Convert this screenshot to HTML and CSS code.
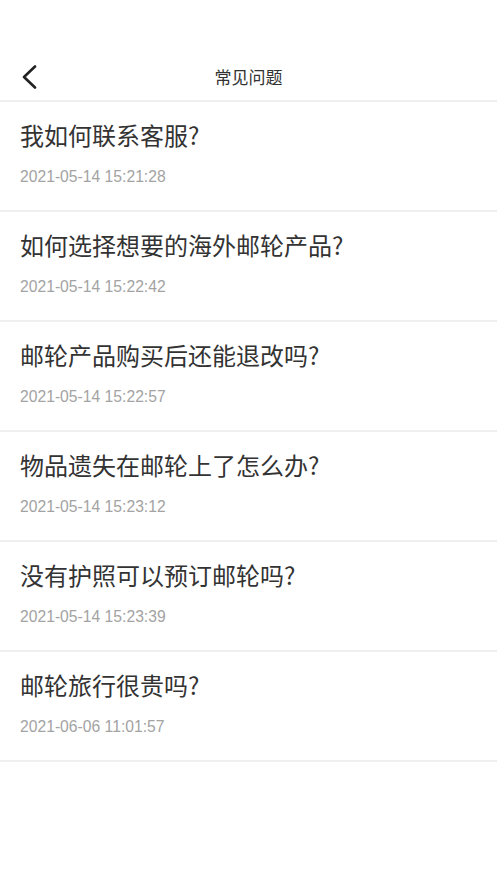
FILE: index.html
```html
<!DOCTYPE html>
<html lang="zh-CN">
<head>
  <meta charset="UTF-8" />
  <meta name="viewport" content="width=device-width, initial-scale=1" />
  <title>常见问题</title>
  <link rel="stylesheet" href="styles.css">
</head>
<body>

  <div class="header">
    <a class="back" href="#">
      <svg width="16" height="24" viewBox="0 0 16 24">
        <path d="M14 1.5 L3 12 L14 22.5" fill="none" stroke="#222" stroke-width="2.6" stroke-linecap="round" stroke-linejoin="round"/>
      </svg>
    </a>
    <h1>常见问题</h1>
  </div>

  <!-- 问题列表 -->
  <ul class="faq-list">
    <li class="faq-item">
      <div class="faq-title">我如何联系客服?</div>
      <div class="faq-time">2021-05-14 15:21:28</div>
    </li>
    <li class="faq-item">
      <div class="faq-title">如何选择想要的海外邮轮产品?</div>
      <div class="faq-time">2021-05-14 15:22:42</div>
    </li>
    <li class="faq-item">
      <div class="faq-title">邮轮产品购买后还能退改吗?</div>
      <div class="faq-time">2021-05-14 15:22:57</div>
    </li>
    <li class="faq-item">
      <div class="faq-title">物品遗失在邮轮上了怎么办?</div>
      <div class="faq-time">2021-05-14 15:23:12</div>
    </li>
    <li class="faq-item">
      <div class="faq-title">没有护照可以预订邮轮吗?</div>
      <div class="faq-time">2021-05-14 15:23:39</div>
    </li>
    <li class="faq-item">
      <div class="faq-title">邮轮旅行很贵吗?</div>
      <div class="faq-time">2021-06-06 11:01:57</div>
    </li>
  </ul>

</body>
</html>
```

FILE: styles.css
```css
* {
  box-sizing: border-box;
  font-family: 'Noto Sans CJK SC', sans-serif;
}
body {
  margin: 0;
  background: #fff;
  color: #333;
}
.header {
  position: relative;
  margin-top: 55px;
  height: 47px;
  border-bottom: 2px solid #efefef;
  display: flex;
  align-items: center;
  justify-content: center;
}
.header h1 {
  margin: 0 0 2px;
  font-size: 17px;
  font-weight: normal;
  color: #333;
}
.back {
  position: absolute;
  left: 21px;
  top: 10px;
  line-height: 0;
}
.faq-list {
  list-style: none;
  margin: 0;
  padding: 0;
}
.faq-item {
  padding: 18px 20px 23px;
  border-bottom: 2px solid #efefef;
}
.faq-title {
  font-size: 24px;
  line-height: 30px;
  color: #333;
}
.faq-time {
  margin-top: 17px;
  font-family: 'Liberation Sans', sans-serif;
  font-size: 15.7px;
  line-height: 20px;
  color: #a3a3a3;
}
```
